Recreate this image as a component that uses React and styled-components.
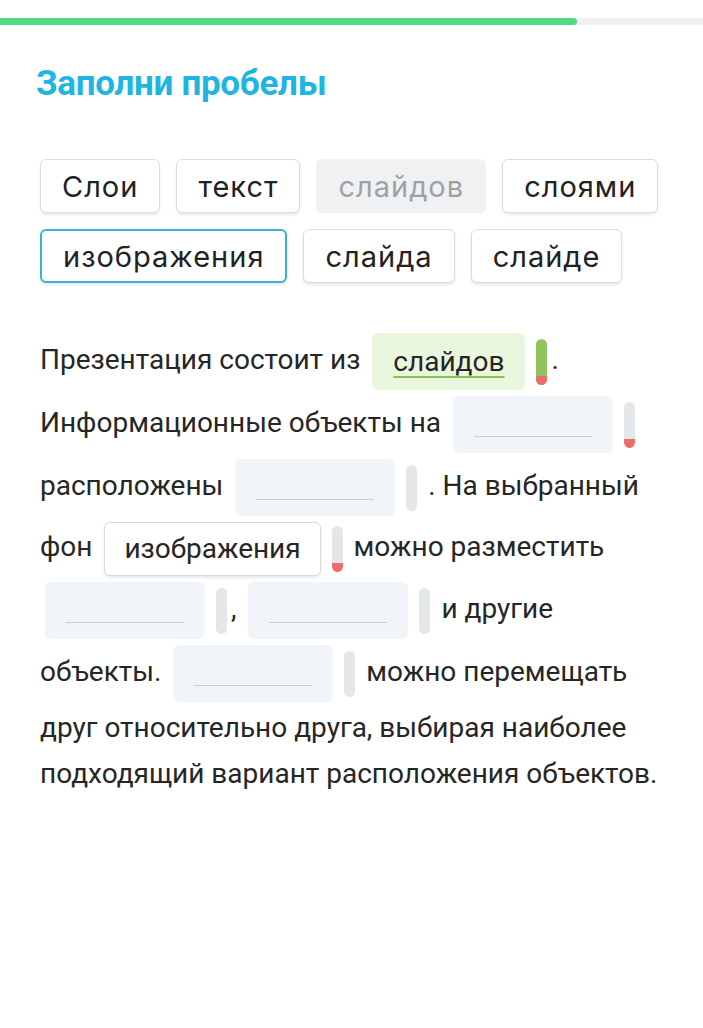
import React from "react";
import styled, { createGlobalStyle } from "styled-components";

const Global = createGlobalStyle`
  html, body { margin: 0; padding: 0; background: #fff; }
  body { font-family: Roboto, "Noto Sans", sans-serif; color: #222; }
`;

const Page = styled.div`
  width: 703px;
  min-height: 1028px;
  background: #fff;
  padding-top: 18px;
  box-sizing: border-box;
`;

const Track = styled.div`
  height: 7px;
  background: #f0f0f0;
  display: flex;
`;

const Fill = styled.div`
  height: 100%;
  background: #4cdd80;
  border-radius: 0 4px 4px 0;
`;

const Title = styled.h1`
  margin: 41px 0 0 36px;
  font-family: Roboto, sans-serif;
  font-weight: 700;
  font-size: 35px;
  line-height: 36px;
  color: #1fb5e3;
  letter-spacing: -0.3px;
`;

const Bank = styled.div`
  display: flex;
  flex-wrap: wrap;
  gap: 16px 16px;
  padding: 0 40px;
  margin-top: 57px;
`;

const Chip = styled.div`
  height: 54px;
  box-sizing: border-box;
  padding: 0 21px;
  display: flex;
  align-items: center;
  font-family: Inter, Roboto, sans-serif;
  font-size: 29px;
  letter-spacing: 1px;
  border-radius: 6px;
  color: ${(p) => (p.$used ? "#9da2a6" : "#222")};
  background: ${(p) => (p.$used ? "#eff1f2" : "#fff")};
  border: ${(p) =>
    p.$selected ? "2px solid #35b4d0" : p.$used ? "1px solid #eff1f2" : "1px solid #dcdcdc"};
  box-shadow: ${(p) => (p.$used ? "none" : "0 2px 3px rgba(0,0,0,0.09)")};
`;

const Text = styled.p`
  margin: 47px 0 0;
  padding: 0 40px;
  font-family: Roboto, sans-serif;
  font-size: 28px;
  line-height: 46px;
  color: #262626;
`;

const Group = styled.span`
  display: inline-flex;
  align-items: center;
  gap: 11px;
  vertical-align: middle;
  margin: 3px 4px 3px 5px;
`;

const Blank = styled.span`
  position: relative;
  display: inline-flex;
  align-items: center;
  justify-content: center;
  box-sizing: border-box;
  height: ${(p) => (p.$kind === "card" ? "54px" : "57px")};
  min-width: ${(p) => (p.$kind === "empty" ? "160px" : "0")};
  padding: 0 ${(p) => (p.$kind === "card" ? "19px" : "21px")};
  border-radius: 6px;
  background: ${(p) =>
    p.$kind === "correct" ? "#e9f7de" : p.$kind === "card" ? "#fff" : "#f1f4f8"};
  border: ${(p) => (p.$kind === "card" ? "1px solid #d9d9d9" : "none")};
  box-shadow: ${(p) => (p.$kind === "card" ? "0 2px 3px rgba(0,0,0,0.09)" : "none")};
`;

const Underline = styled.span`
  position: absolute;
  left: 21px;
  right: 21px;
  bottom: 16px;
  height: 1px;
  background: #c9cdd1;
`;

const Word = styled.span`
  line-height: 1;
  color: #262626;
  text-decoration: ${(p) => (p.$ok ? "underline" : "none")};
  text-decoration-color: #8cc152;
  text-decoration-thickness: 2px;
  text-underline-offset: 5px;
`;

const Meter = styled.span`
  display: inline-flex;
  flex-direction: column;
  justify-content: flex-end;
  width: 11px;
  height: 46px;
  border-radius: 6px;
  overflow: hidden;
  background: ${(p) => (p.$green ? "#8fc35c" : "#e3e7e9")};
`;

const MeterBad = styled.span`
  height: 9px;
  background: #f06a6a;
  border-radius: 0 0 6px 6px;
`;

function Gap({ kind = "empty", word, green, bad }) {
  return (
    <Group>
      <Blank $kind={kind}>
        {word ? <Word $ok={kind === "correct"}>{word}</Word> : <Underline />}
      </Blank>
      <Meter $green={green}>{bad && <MeterBad />}</Meter>
    </Group>
  );
}

const chips = [
  { t: "Слои" },
  { t: "текст" },
  { t: "слайдов", used: true },
  { t: "слоями" },
  { t: "изображения", selected: true },
  { t: "слайда" },
  { t: "слайде" },
];

export default function App() {
  return (
    <Page>
      <Global />
      <Track>
        <Fill style={{ width: "82.1%" }} />
      </Track>
      <Title>Заполни пробелы</Title>
      <Bank>
        {chips.map((c) => (
          <Chip key={c.t} $used={c.used} $selected={c.selected}>
            {c.t}
          </Chip>
        ))}
      </Bank>
      <Text>
        Презентация состоит из <Gap kind="correct" word="слайдов" green bad />. Информационные
        объекты на <Gap bad /> расположены <Gap /> . На выбранный фон{" "}
        <Gap kind="card" word="изображения" bad /> можно разместить <Gap />, <Gap /> и другие
        объекты. <Gap /> можно перемещать друг относительно друга, выбирая наиболее подходящий
        вариант расположения объектов.
      </Text>
    </Page>
  );
}
